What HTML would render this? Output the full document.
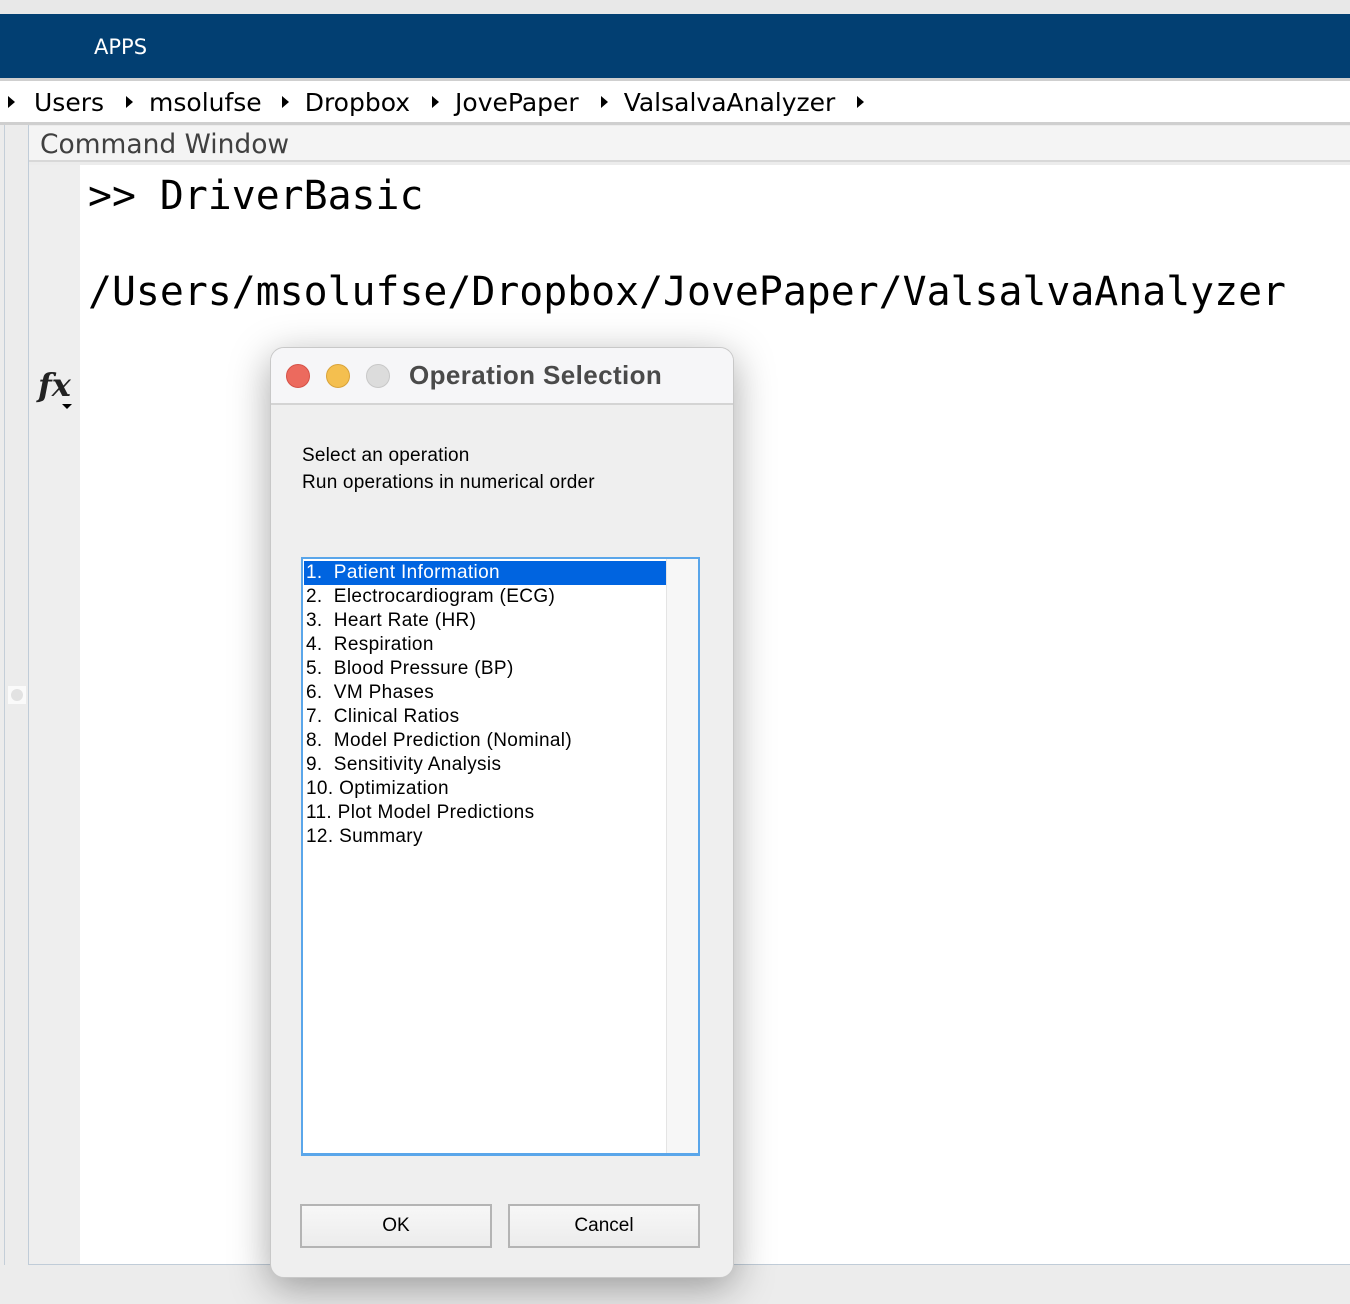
<!DOCTYPE html>
<html><head><meta charset="utf-8"><style>
*{margin:0;padding:0;box-sizing:border-box}
body{width:1350px;height:1304px;background:#ececec;position:relative;overflow:hidden;font-family:"Liberation Sans",sans-serif}
.abs{position:absolute}
.tri{display:inline-block;width:0;height:0;border-left:7px solid #000;border-top:6px solid transparent;border-bottom:6px solid transparent;vertical-align:middle;margin:0 16px 0 8px;position:relative;top:-2px}
.mono{font-family:"DejaVu Sans Mono","Liberation Mono",monospace;font-size:39.8px;color:#000;white-space:pre}
.li{height:24px;line-height:24px;font-size:19px;letter-spacing:0.35px;padding-left:2px;color:#000;white-space:pre}
.btn{position:absolute;top:1204px;height:44px;border:2px solid #b4b4b4;background:linear-gradient(#f7f7f7,#ececec);font-size:19px;text-align:center;line-height:40px;color:#000}
</style></head><body>
<div class="abs" style="left:0;top:0;width:1350px;height:14px;background:#e8e8e8"></div>
<div class="abs" style="left:0;top:14px;width:1350px;height:64px;background:#023f72"></div>
<div class="abs" style="left:94px;top:35px;color:#fff;font-size:21px;font-family:'DejaVu Sans',sans-serif">APPS</div>
<div class="abs" style="left:0;top:78px;width:1350px;height:3px;background:#cfcfcf"></div>
<div class="abs" style="left:0;top:81px;width:1350px;height:41px;background:#fff;font-size:25px;line-height:43px;white-space:nowrap;font-family:'DejaVu Sans',sans-serif"><span class="tri" style="margin-left:8px;margin-right:19px"></span>Users<span class="tri" style="margin-left:22px"></span>msolufse<span class="tri" style="margin-left:20px"></span>Dropbox<span class="tri" style="margin-left:22px"></span>JovePaper<span class="tri" style="margin-left:22px"></span>ValsalvaAnalyzer<span class="tri" style="margin-left:22px"></span></div>
<div class="abs" style="left:0;top:122px;width:1350px;height:3px;background:#cfcfcf"></div>
<div class="abs" style="left:4px;top:125px;width:1px;height:1140px;background:#c4ced8"></div>
<div class="abs" style="left:28px;top:125px;width:1px;height:1140px;background:#c0ccd8"></div>
<div class="abs" style="left:28px;top:1264px;width:1322px;height:1px;background:#c0ccd8"></div>
<div class="abs" style="left:29px;top:126px;width:1321px;height:36px;background:#f4f4f4;border-bottom:2px solid #d8d8d8"></div>
<div class="abs" style="left:40px;top:129px;font-size:26.5px;color:#404040;font-family:'DejaVu Sans',sans-serif">Command Window</div>
<div class="abs" style="left:29px;top:165px;width:51px;height:1099px;background:#eeeeee"></div>
<div class="abs" style="left:80px;top:165px;width:1270px;height:1099px;background:#fff"></div>
<div class="abs" style="left:8px;top:686px;width:18px;height:18px;background:#fafafa"><div style="margin:3px;width:12px;height:12px;border-radius:50%;background:#e2e2e2"></div></div>
<div class="abs" style="left:38px;top:366px;font-family:'DejaVu Serif','Liberation Serif',serif;font-style:italic;font-weight:bold;font-size:32px;color:#222">fx</div>
<div class="abs" style="left:62px;top:404px;width:0;height:0;border-left:5px solid transparent;border-right:5px solid transparent;border-top:5px solid #000"></div>
<div class="abs mono" style="left:88px;top:173px">&gt;&gt; DriverBasic</div>
<div class="abs mono" style="left:88px;top:269px">/Users/msolufse/Dropbox/JovePaper/ValsalvaAnalyzer</div>

<div class="abs" style="left:270px;top:347px;width:464px;height:931px;background:#efefef;border:1px solid #c8c8c8;border-radius:14px;box-shadow:0 10px 40px rgba(0,0,0,0.35);overflow:hidden">
 <div style="height:57px;background:#f6f6f8;border-bottom:2px solid #d4d4d4;position:relative">
  <div class="abs" style="left:15px;top:16px;width:24px;height:24px;border-radius:50%;background:#ec6a5e;border:1px solid #d55248"></div>
  <div class="abs" style="left:55px;top:16px;width:24px;height:24px;border-radius:50%;background:#f4bf4f;border:1px solid #d9a33a"></div>
  <div class="abs" style="left:95px;top:16px;width:24px;height:24px;border-radius:50%;background:#dcdcdc;border:1px solid #c8c8c8"></div>
  <div class="abs" style="left:138px;top:12px;font-size:26px;font-weight:bold;color:#4a4a4a;letter-spacing:0.4px">Operation Selection</div>
 </div>
 <div class="abs" style="left:31px;top:94px;font-size:19px;line-height:27px;color:#000;letter-spacing:0.2px">Select an operation<br>Run operations in numerical order</div>
 <div class="abs" style="left:30px;top:209px;width:399px;height:599px;border:2px solid #5aa6ea;border-bottom-width:3px;background:#fff;padding:2px 1px">
  <div class="abs" style="right:0;top:0;width:32px;height:100%;background:#f7f7f7;border-left:1px solid #e4e4e4"></div>
  <div class="li" style="background:#0064e0;color:#fff;width:363px">1.  Patient Information</div>
  <div class="li">2.  Electrocardiogram (ECG)</div>
  <div class="li">3.  Heart Rate (HR)</div>
  <div class="li">4.  Respiration</div>
  <div class="li">5.  Blood Pressure (BP)</div>
  <div class="li">6.  VM Phases</div>
  <div class="li">7.  Clinical Ratios</div>
  <div class="li">8.  Model Prediction (Nominal)</div>
  <div class="li">9.  Sensitivity Analysis</div>
  <div class="li">10. Optimization</div>
  <div class="li">11. Plot Model Predictions</div>
  <div class="li">12. Summary</div>
 </div>
</div>
<div class="btn" style="left:300px;width:192px">OK</div>
<div class="btn" style="left:508px;width:192px">Cancel</div>
</body></html>
